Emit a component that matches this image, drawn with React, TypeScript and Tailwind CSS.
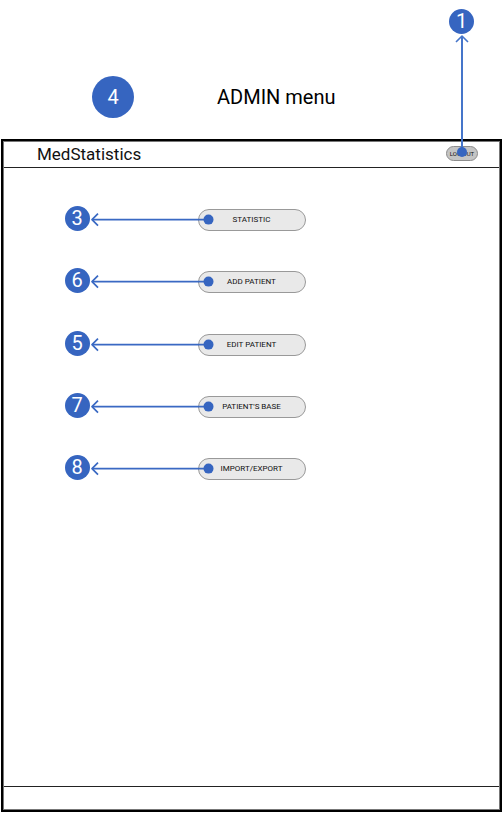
import React from "react";

type MenuItem = { label: string; step: number };

const items: MenuItem[] = [
  { label: "STATISTIC", step: 3 },
  { label: "ADD PATIENT", step: 6 },
  { label: "EDIT PATIENT", step: 5 },
  { label: "PATIENT'S BASE", step: 7 },
  { label: "IMPORT/EXPORT", step: 8 },
];

function Badge({ step }: { step: number }) {
  return (
    <span className="flex size-[25px] shrink-0 items-center justify-center rounded-full bg-[#3665c0] text-[20px] leading-[25px] text-white">
      {step}
    </span>
  );
}

function LeftCallout({ step }: { step: number }) {
  return (
    <div className="pointer-events-none absolute -top-[3px] -left-[133px] flex items-start">
      <Badge step={step} />
      <svg width="124" height="28" viewBox="0 0 124 28" fill="none" stroke="#3a69c3" strokeWidth="1.7" aria-hidden="true">
        <path d="M2 13.6H118" />
        <path d="M8 7.6L2 13.6L8 19.6" strokeLinejoin="round" />
        <circle cx="118.5" cy="13.6" r="5" fill="#3665c0" stroke="none" />
      </svg>
    </div>
  );
}

function UpCallout({ step }: { step: number }) {
  return (
    <div className="pointer-events-none absolute bottom-1 left-[3px] flex flex-col items-start">
      <Badge step={step} />
      <svg width="26" height="123" viewBox="0 0 26 123" fill="none" stroke="#4575ca" strokeWidth="2" aria-hidden="true">
        <path d="M13 2V118" />
        <path d="M7 8L13 2L19 8" strokeLinejoin="round" strokeWidth="1.6" />
        <circle cx="13" cy="118" r="5" fill="#3665c0" stroke="none" />
      </svg>
    </div>
  );
}

export default function App() {
  return (
    <div className="flex min-h-screen flex-col bg-white pr-0.5 pb-0.5 pl-px font-[Roboto,'Liberation_Sans',sans-serif] text-[#111]">
      <div className="flex h-[139px] shrink-0 items-center gap-[83px] pt-[55px] pl-[91px]">
        <span className="flex size-[42px] items-center justify-center rounded-full bg-[#3665c0] text-[20px] leading-6 text-white">
          4
        </span>
        <h1 className="text-[20px] leading-6 text-black">ADMIN menu</h1>
      </div>

      <div className="flex grow flex-col border-2 border-black p-px inset-shadow-[0_0_0_1px_#777]">
        <header className="flex h-[26px] items-center justify-between border-b border-[#222] pr-[21px] pb-0.5 pl-[33px]">
          <h2 className="text-[17px] leading-5">MedStatistics</h2>
          <div className="relative">
            <button
              type="button"
              className="flex h-[15px] w-8 items-center justify-center rounded-full border border-[#8c8c8c] bg-[#c4c4c4] text-[6px] leading-none whitespace-nowrap"
            >
              LOG OUT
            </button>
            <UpCallout step={1} />
          </div>
        </header>

        <main className="grow pt-[41px]">
          <nav aria-label="Admin menu">
            <ul className="mx-auto flex h-[271px] w-[108px] flex-col justify-between">
              {items.map((item) => (
                <li key={item.step} className="relative">
                  <button
                    type="button"
                    className="flex h-[22px] w-full items-center justify-center rounded-full border border-[#999] bg-[#e9e9e9] text-[8px] leading-none"
                  >
                    {item.label}
                  </button>
                  <LeftCallout step={item.step} />
                </li>
              ))}
            </ul>
          </nav>
        </main>

        <footer className="h-[23px] border-t border-[#222]" />
      </div>
    </div>
  );
}
